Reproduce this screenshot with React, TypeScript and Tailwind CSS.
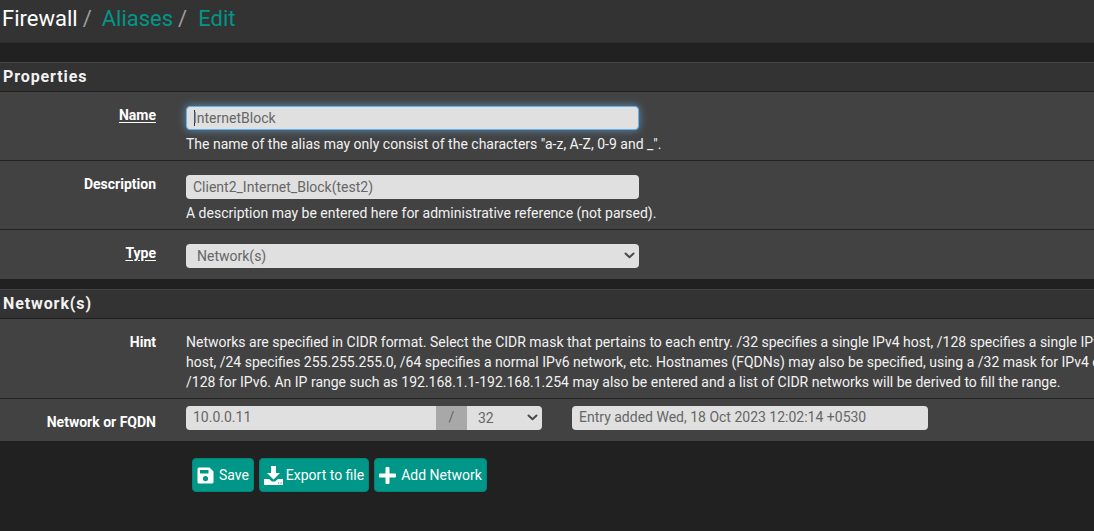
function Chevron() {
  return (
    <svg width="11" height="7" viewBox="0 0 11 7" fill="none" className="mb-[2px] shrink-0">
      <path d="M1.500 1.500l4 3.700 4-3.700" stroke="#4a4a4a" strokeWidth="2" strokeLinecap="round" strokeLinejoin="round" />
    </svg>
  )
}

function SaveIcon() {
  return (
    <svg width="17" height="17" viewBox="0 0 17 17" className="shrink-0">
      <path
        fillRule="evenodd"
        fill="#fff"
        d="M2 0.5h10.5l4 4V15a1.5 1.5 0 0 1-1.5 1.5H2A1.5 1.5 0 0 1 .5 15V2A1.5 1.5 0 0 1 2 .5zM3 3v3.5h8.5V3zM8.5 9a2.6 2.6 0 1 0 0 5.2 2.6 2.6 0 0 0 0-5.2z"
      />
    </svg>
  )
}

function DownloadIcon() {
  return (
    <svg width="19" height="19" viewBox="0 0 19 19" className="shrink-0">
      <path fill="#fff" d="M7 0h5v7h4l-6.500 6.500L3 7h4z" />
      <path fill="#fff" fillRule="evenodd" d="M0 13h5l3 2.500h3l3-2.500h5v6H0zM14 16.500v1h1.200v-1zM16.500 16.500v1h1.200v-1z" />
    </svg>
  )
}

function PlusIcon() {
  return (
    <svg width="17" height="17" viewBox="0 0 17 17" className="shrink-0">
      <path fill="#fff" d="M6.500 1a1 1 0 0 1 1-1h2a1 1 0 0 1 1 1v5.500H16a1 1 0 0 1 1 1v2a1 1 0 0 1-1 1h-5.500V16a1 1 0 0 1-1 1h-2a1 1 0 0 1-1-1v-5.500H1a1 1 0 0 1-1-1v-2a1 1 0 0 1 1-1h5.500z" />
    </svg>
  )
}

function Heading({ children }: { children: string }) {
  return (
    <div className="h-[30px] border-t border-b border-t-[#454545] border-b-[#1f1f1f] bg-[#333333] pl-[3px] text-[16px] leading-[28px] font-bold tracking-[0.9px] text-[#f2f2f2]">
      {children}
    </div>
  )
}

function Row({ label, under, h, last, children }: { label: string; under?: boolean; h: string; last?: boolean; children: React.ReactNode }) {
  return (
    <div className={`flex bg-[#424242] ${h} ${last ? "" : "border-b border-[#232323]"}`}>
      <div className="w-[156px] shrink-0 pt-[13px] text-right text-[14px] leading-[20px] font-bold text-white">
        <span className={under ? "underline underline-offset-2" : ""}>{label}</span>
      </div>
      <div className="ml-[30px] min-w-0 flex-1 pt-[14px]">{children}</div>
    </div>
  )
}

function Field({ value, w, focus, raise }: { value: string; w: string; focus?: boolean; raise?: boolean }) {
  return (
    <div
      className={`${w} flex h-[24px] items-center rounded-[4px] bg-[#e0e0e0] pl-[7px] text-[14px] text-[#666666] ${raise ? "pb-[1px]" : ""} ${
        focus ? "border border-[#66afe9] pl-[6px] shadow-[0_0_8px_rgba(102,175,233,0.7)]" : ""
      }`}
    >
      {focus && <span className="-mr-[2px] h-[16px] w-px shrink-0 bg-[#333333]" />}
      {value}
    </div>
  )
}

function Help({ children }: { children: string }) {
  return <div className="mt-[4px] text-[14px] leading-[20px] whitespace-nowrap text-[#f2f2f2]">{children}</div>
}

function Button({ icon, label, w, gap }: { icon: React.ReactNode; label: string; w: string; gap: string }) {
  return (
    <div className={`${w} ${gap} flex h-[34px] items-center justify-center rounded-[4px] border border-[#00897b] bg-[#009688] text-[14px] text-white`}>
      {icon}
      {label}
    </div>
  )
}

export default function App() {
  return (
    <div className="h-[531px] w-[1094px] overflow-hidden bg-[#212121] font-['Roboto',sans-serif]">
      <div className="flex h-[42px] items-center bg-[#333333] pb-[6px] pl-[2px] text-[22px] whitespace-nowrap">
        <span className="text-white">Firewall</span>
        <span className="ml-[5px] text-[#9e9e9e]">/</span>
        <span className="ml-[10px] text-[#009688]">Aliases</span>
        <span className="ml-[5px] text-[#9e9e9e]">/</span>
        <span className="ml-[11px] text-[#009688]">Edit</span>
      </div>
      <div className="h-[20px] border-t border-[#2b2b2b] bg-[#212121]" />

      <Heading>Properties</Heading>
      <Row label="Name" under h="h-[69px]">
        <Field value="InternetBlock" w="w-[453px]" focus />
        <Help>{'The name of the alias may only consist of the characters "a-z, A-Z, 0-9 and _".'}</Help>
      </Row>
      <Row label="Description" h="h-[69px]">
        <Field value="Client2_Internet_Block(test2)" w="w-[453px]" />
        <Help>A description may be entered here for administrative reference (not parsed).</Help>
      </Row>
      <Row label="Type" under h="h-[49px]" last>
        <div className="flex h-[24px] w-[453px] items-center justify-between rounded-[4px] bg-[#e0e0e0] pr-[4px] pl-[11px] text-[14px] text-[#666666]">
          Network(s)
          <Chevron />
        </div>
      </Row>

      <div className="h-[10px]" />
      <Heading>Network(s)</Heading>
      <Row label="Hint" h="h-[80px]">
        <div className="-mt-[1px] overflow-hidden text-[14px] leading-[20px] whitespace-nowrap text-[#f2f2f2]">
          <div>Networks are specified in CIDR format. Select the CIDR mask that pertains to each entry. /32 specifies a single IPv4 host, /128 specifies a single IPv6</div>
          <div>host, /24 specifies 255.255.255.0, /64 specifies a normal IPv6 network, etc. Hostnames (FQDNs) may also be specified, using a /32 mask for IPv4 or</div>
          <div>/128 for IPv6. An IP range such as 192.168.1.1-192.168.1.254 may also be entered and a list of CIDR networks will be derived to fill the range.</div>
        </div>
      </Row>
      <div className="flex h-[42px] bg-[#424242]">
        <div className="w-[156px] shrink-0 pt-[13px] text-right text-[14px] leading-[20px] font-bold text-white">Network or FQDN</div>
        <div className="ml-[30px] flex flex-1 items-start pt-[7px]">
          <div className="flex h-[24px] w-[250px] items-center rounded-l-[4px] bg-[#e0e0e0] pb-[1px] pl-[7px] text-[14px] text-[#666666]">10.0.0.11</div>
          <div className="flex h-[24px] w-[31px] items-center justify-center bg-[#a8a8a8] pb-[1px] text-[14px] text-[#666666]">/</div>
          <div className="flex h-[24px] w-[75px] items-center justify-between rounded-r-[4px] bg-[#e0e0e0] pr-[4px] pl-[11px] text-[14px] text-[#666666]">
            32
            <Chevron />
          </div>
          <div className="ml-[30px]">
            <Field value="Entry added Wed, 18 Oct 2023 12:02:14 +0530" w="w-[356px]" raise />
          </div>
        </div>
      </div>

      <div className="flex gap-[5px] pt-[17px] pl-[192px]">
        <Button icon={<SaveIcon />} label="Save" w="w-[62px]" gap="gap-[5px]" />
        <Button icon={<DownloadIcon />} label="Export to file" w="w-[110px]" gap="gap-[3px]" />
        <Button icon={<PlusIcon />} label="Add Network" w="w-[113px]" gap="gap-[5px]" />
      </div>
    </div>
  )
}
